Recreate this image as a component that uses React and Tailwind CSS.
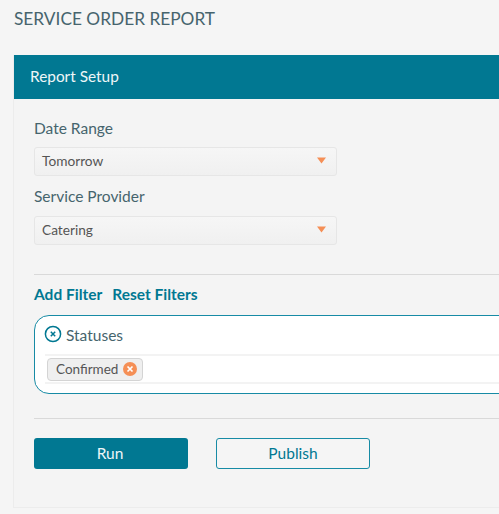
function Select({ value }) {
  return (
    <div className="flex h-[29px] w-[303px] items-center justify-between rounded-[3px] border border-[#e6e6e6] bg-gradient-to-b from-[#f6f6f6] to-[#f0f0f0] pl-[7px] pr-[10px] text-[13.7px] text-[#555]">
      <span>{value}</span>
      <svg width="9" height="7" viewBox="0 0 9 7" className="-mt-0.5"><path d="M0 0.5h9L4.5 6.5z" fill="#f58f56" /></svg>
    </div>
  );
}

export default function App() {
  return (
    <div className="h-[514px] w-[499px] overflow-hidden bg-[#f5f5f5] font-['Lato',sans-serif]">
      <h1 className="h-[55px] pl-[14px] pt-[9px] text-[17.3px] leading-[20px] text-[#46646d]">SERVICE ORDER REPORT</h1>
      <div className="ml-[13px] h-[453px] w-[600px] border-b border-l border-[#ececec] bg-[#f4f4f4]">
        <div className="flex h-[44px] items-center bg-[#017892] pb-[1px] pl-[16px] text-[15.4px] text-[#eef6f8]">Report Setup</div>
        <div className="pl-[20px] pr-0">
          <div className="pt-[19px] text-[15.5px] leading-[20px] text-[#46646d]">Date Range</div>
          <div className="mt-[9px]"><Select value="Tomorrow" /></div>
          <div className="mt-[10px] text-[15.5px] leading-[20px] text-[#46646d]">Service Provider</div>
          <div className="mt-[10px]"><Select value="Catering" /></div>
          <div className="mt-[29px] h-px bg-[#d9d9d9]" />
          <div className="mt-[9px] flex gap-[10px] text-[15.5px] font-bold leading-[20px] text-[#017892]">
            <span>Add Filter</span>
            <span>Reset Filters</span>
          </div>
          <div className="mt-[11px] h-[79px] rounded-[15px] border border-[#178ba5] bg-white pl-[10px]">
            <div className="flex h-[38px] items-center gap-[4px]">
              <svg width="18" height="18" viewBox="0 0 18 18" className="-ml-px -mt-[2px]">
                <circle cx="9" cy="9" r="7.6" fill="none" stroke="#017892" strokeWidth="1.5" />
                <path d="M6.8 6.8l4.4 4.4M11.2 6.8l-4.4 4.4" stroke="#017892" strokeWidth="1.5" />
              </svg>
              <span className="mt-[2px] text-[15.5px] text-[#46646d]">Statuses</span>
            </div>
            <div className="flex h-[30px] items-center border-y-2 border-[#f3f3f3] pl-[2px]">
              <div className="flex h-[23px] items-center gap-[5px] rounded-[4px] border border-[#d4d4d4] bg-[#efefef] pl-2 pr-[5px] text-[13.5px] text-[#555]">
                <span>Confirmed</span>
                <span className="flex h-[14px] w-[14px] items-center justify-center rounded-full bg-[#f58f56]">
                  <svg width="8" height="8" viewBox="0 0 8 8"><path d="M1.5 1.5l5 5M6.5 1.5l-5 5" stroke="#fff" strokeWidth="1.7" /></svg>
                </span>
              </div>
            </div>
          </div>
          <div className="mt-[24px] h-px bg-[#d9d9d9]" />
          <div className="mt-[19px] flex gap-[28px] text-[15.5px]">
            <button className="h-[31px] w-[154px] rounded-[3px] bg-[#017892] pr-[2px] text-[#eef6f8]">Run</button>
            <button className="h-[31px] w-[154px] rounded-[3px] border border-[#178ba5] bg-[#f5f5f5] text-[#017892]">Publish</button>
          </div>
        </div>
      </div>
    </div>
  );
}
